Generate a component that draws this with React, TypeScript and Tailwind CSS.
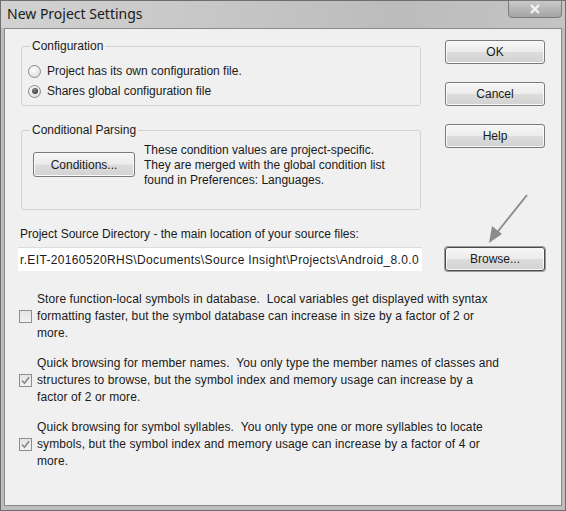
const font = "font-['Liberation_Sans',Arial,sans-serif]";

const Btn = ({ label, strong }: { label: string; strong?: boolean }) => (
  <div
    className={`w-[100px] h-[24px] flex items-center justify-center rounded-[3px] text-[12px] text-[#1a1a1a] bg-[linear-gradient(to_bottom,#f6f6f6_0%,#ececec_48%,#dcdcdc_52%,#d2d2d2_100%)] ${
      strong
        ? "border border-[#4a4a4a] shadow-[0_0_0_1px_#9a9a9a,inset_0_0_0_1px_#f8f8f8]"
        : "border border-[#7a7a7a] shadow-[inset_0_0_0_1px_#fafafa]"
    }`}
  >
    {label}
  </div>
);

const Radio = ({ on }: { on?: boolean }) => (
  <span className="w-[13px] h-[13px] rounded-full border border-[#8c8c8c] bg-[radial-gradient(circle_at_40%_35%,#ffffff,#d4d4d4)] flex items-center justify-center shrink-0">
    {on && <span className="w-[6px] h-[6px] rounded-full bg-[radial-gradient(circle_at_40%_35%,#8a8a8a,#222222)]" />}
  </span>
);

const Check = ({ on }: { on?: boolean }) => (
  <span className="w-[13px] h-[13px] border border-[#8e8e8e] bg-[linear-gradient(to_bottom,#e4e4e4,#f2f2f2)] flex items-center justify-center shrink-0">
    {on && (
      <svg width="9" height="9" viewBox="0 0 9 9">
        <path d="M1 4.5 L3.5 7.2 L8 1.2" fill="none" stroke="#8a8a8a" strokeWidth="1.6" />
      </svg>
    )}
  </span>
);

const Option = ({ lines, on }: { lines: string[]; on?: boolean }) => (
  <div className="flex items-center gap-[5px]">
    <Check on={on} />
    <div className="leading-[17px] whitespace-pre tracking-[0.1px]">
      {lines.map((l) => (
        <div key={l}>{l}</div>
      ))}
    </div>
  </div>
);

export default function App() {
  return (
    <div className={`w-[566px] h-[511px] ${font} text-[12px] text-[#1a1a1a] bg-[#bdbdbd] border border-[#6e6e6e] flex flex-col px-[3px] pb-[4px]`}>
      {/* title bar */}
      <div className="h-[27px] shrink-0 flex items-start justify-between -mx-[3px] pl-[6px] pr-[3px] bg-[linear-gradient(to_right,#d2d2d2,#c6c6c6_40%,#bcbcbc_70%,#c4c4c4)]">
        <span className="mt-[3px] text-[14px] text-[#1a1a1a] font-['Noto_Sans',sans-serif] leading-[20px]">New Project Settings</span>
        <div className="w-[54px] h-[18px] -mt-px rounded-b-[4px] border border-[#7a7a7a] bg-[linear-gradient(to_bottom,#cacaca,#a4a4a4)] flex items-center justify-center">
          <svg width="12" height="10" viewBox="0 0 12 10">
            <path d="M2 1 L10 9 M10 1 L2 9" stroke="#f4f4f4" strokeWidth="2.4" />
          </svg>
        </div>
      </div>

      {/* client area */}
      <div className="flex-1 bg-[#f0f0f0] border border-[#8a8a8a] flex flex-col pl-[13px]">
        <div className="flex">
          <div className="flex flex-col w-[408px] ml-[3px]">
            <fieldset className="mt-[10px] border border-[#d2d2d2] rounded-[3px] px-[8px] pb-[4px] w-[400px]">
              <legend className="px-[2px] leading-[15px]">Configuration</legend>
              <div className="flex flex-col pt-[7px]">
                <label className="flex items-center gap-[6px] h-[20px] -ml-[2px]">
                  <Radio />
                  <span>Project has its own configuration file.</span>
                </label>
                <label className="flex items-center gap-[6px] h-[20px] -ml-[2px]">
                  <Radio on />
                  <span>Shares global configuration file</span>
                </label>
              </div>
            </fieldset>

            <fieldset className="mt-[17px] border border-[#d2d2d2] rounded-[3px] px-[11px] pt-[5px] pb-[21px] w-[400px]">
              <legend className="-ml-[3px] px-[2px] leading-[15px]">Conditional Parsing</legend>
              <div className="flex items-start gap-[9px]">
                <div className="mt-[9px]">
                  <div className="w-[102px] h-[25px] flex items-center justify-center rounded-[3px] border border-[#7a7a7a] shadow-[inset_0_0_0_1px_#fafafa] bg-[linear-gradient(to_bottom,#f6f6f6_0%,#ececec_48%,#dcdcdc_52%,#d2d2d2_100%)]">
                    Conditions...
                  </div>
                </div>
                <div className="leading-[15px]">
                  <div>These condition values are project-specific.</div>
                  <div>They are merged with the global condition list</div>
                  <div>found in Preferences: Languages.</div>
                </div>
              </div>
            </fieldset>
          </div>

          <div className="flex flex-col gap-[18px] ml-[16px] mt-[11px]">
            <Btn label="OK" />
            <Btn label="Cancel" />
            <Btn label="Help" />
          </div>
        </div>

        <div className="mt-[17px] ml-[2px] leading-[15px]">
          Project Source Directory - the main location of your source files:
        </div>
        <div className="flex items-center mt-[5px]">
          <div className="w-[404px] h-[24px] bg-white border-t border-[#dcdcdc] flex items-center pl-[2px] overflow-hidden whitespace-nowrap tracking-[0.35px]">
            r.EIT-20160520RHS\Documents\Source Insight\Projects\Android_8.0.0
          </div>
          <div className="relative ml-[23px]">
            <Btn label="Browse..." strong />
            <svg className="absolute left-[40px] -top-[54px]" width="46" height="52" viewBox="0 0 46 52">
              <path d="M42 2 L10 42" stroke="#8c8c8c" strokeWidth="2" />
              <path d="M4 50 L7 33 L17 41 Z" fill="#8c8c8c" />
            </svg>
          </div>
        </div>

        <div className="flex flex-col gap-[13px] mt-[20px] ml-[1px]">
          <Option
            lines={[
              "Store function-local symbols in database.  Local variables get displayed with syntax",
              "formatting faster, but the symbol database can increase in size by a factor of 2 or",
              "more.",
            ]}
          />
          <Option
            on
            lines={[
              "Quick browsing for member names.  You only type the member names of classes and",
              "structures to browse, but the symbol index and memory usage can increase by a",
              "factor of 2 or more.",
            ]}
          />
          <Option
            on
            lines={[
              "Quick browsing for symbol syllables.  You only type one or more syllables to locate",
              "symbols, but the symbol index and memory usage can increase by a factor of 4 or",
              "more.",
            ]}
          />
        </div>
      </div>
    </div>
  );
}
